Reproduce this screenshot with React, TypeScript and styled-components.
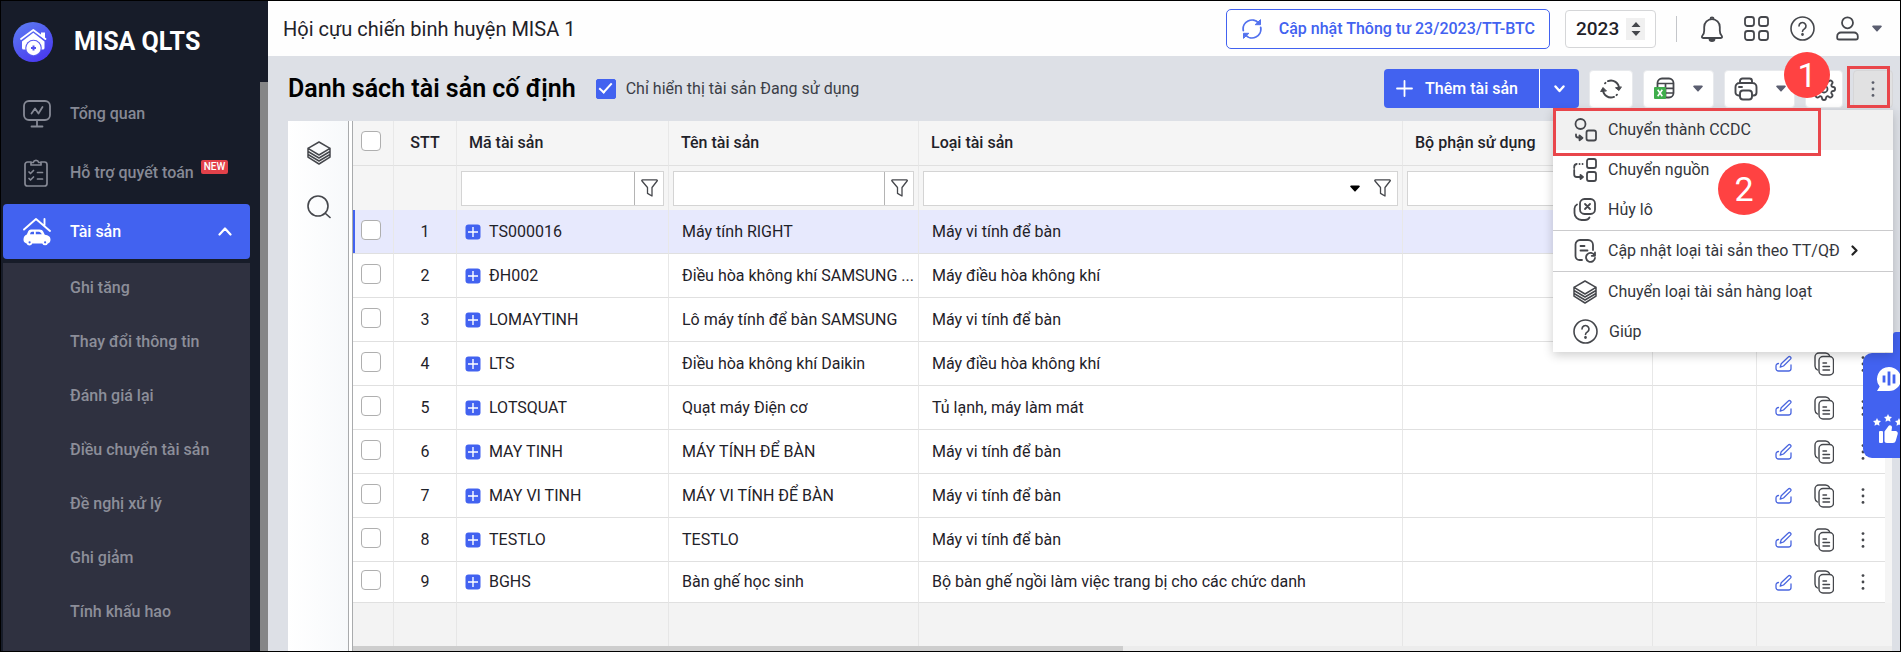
import React from "react";
import styled, { createGlobalStyle, css } from "styled-components";

const BLUE = "#4262f0";
const RED = "#e9464b";
const INK = "#1f2229";
const LINE = "#e0e0e0";

const GlobalStyle = createGlobalStyle`
  *, *::before, *::after { box-sizing: border-box; }
  body {
    margin: 0;
    font-family: Roboto, "Noto Sans", sans-serif;
    font-size: 16px;
    line-height: 20px;
    color: ${INK};
  }
  button, input, select { font: inherit; color: inherit; margin: 0; }
  button { border: 0; padding: 0; background: none; cursor: pointer; }
  a { color: inherit; text-decoration: none; }
  svg { display: block; flex: none; }
`;

/* ---------- shell ---------- */

const Frame = styled.div`
  display: flex;
  height: 100vh;
  min-height: 652px;
  border: 1px solid #000;
  overflow: hidden;
`;

const Sidebar = styled.aside`
  flex: none;
  width: 267px;
  display: flex;
  flex-direction: column;
  background: #171c29;
`;

const Brand = styled.div`
  display: flex;
  align-items: center;
  gap: 21px;
  height: 81px;
  padding-left: 12px;
  color: #fff;
  font-size: 25px;
  line-height: 32px;
  font-weight: 700;
`;

const MenuScroll = styled.div`
  flex: 1;
  min-height: 0;
  display: flex;
`;

const SideNav = styled.nav`
  flex: 1;
  display: flex;
  flex-direction: column;
  gap: 4px;
  padding: 4px 10px 0 2px;
`;

const SideTrack = styled.div`
  width: 8px;
  background: #858687;
`;

const SideItem = styled.a<{ $active?: boolean }>`
  flex: none;
  display: flex;
  align-items: center;
  height: 55px;
  padding: 0 18px 0 20px;
  gap: 19px;
  border-radius: 4px;
  font-weight: 500;
  color: ${(p) => (p.$active ? "#fff" : "#868995")};
  background: ${(p) => (p.$active ? BLUE : "transparent")};
  & > svg:last-child:not(:first-child) { margin-left: auto; }
`;

const ItemLabel = styled.span`
  display: flex;
  gap: 7px;
  white-space: nowrap;
`;

const NewBadge = styled.span`
  align-self: flex-start;
  height: 14px;
  padding: 0 3px;
  margin-top: -3px;
  border-radius: 2px;
  background: #e2414a;
  color: #fff;
  font-size: 10px;
  line-height: 14px;
  font-weight: 500;
`;

const SubMenu = styled.div`
  flex: 1;
  min-height: 0;
  overflow: hidden;
  display: flex;
  flex-direction: column;
  gap: 4px;
  background: #2f3140;
`;

const SubItem = styled.a`
  flex: none;
  height: 50px;
  padding-left: 67px;
  line-height: 50px;
  font-weight: 500;
  color: #8c8e99;
`;

const Main = styled.main`
  flex: 1;
  min-width: 0;
  display: flex;
  flex-direction: column;
  background: #dde0e6;
  position: relative;
`;

/* ---------- top bar ---------- */

const TopBar = styled.header`
  flex: none;
  display: flex;
  align-items: center;
  height: 55px;
  padding: 0 18px 0 15px;
  background: #fefefe;
`;

const OrgName = styled.div`
  flex: 1;
  font-size: 20px;
  line-height: 24px;
`;

const UpdateButton = styled.button`
  display: flex;
  align-items: center;
  gap: 17px;
  height: 40px;
  padding: 0 14px 0 15px;
  border: 1px solid ${BLUE};
  border-radius: 5px;
  background: #fff;
  color: ${BLUE};
  font-weight: 500;
  white-space: nowrap;
`;

const YearBox = styled.label`
  display: flex;
  align-items: center;
  justify-content: space-between;
  width: 91px;
  height: 38px;
  margin-left: 15px;
  padding: 0 10px;
  border: 1px solid #d5d6d8;
  border-radius: 4px;
  background: #fff;
`;

const YearInput = styled.input`
  width: 48px;
  border: 0;
  padding: 0;
  background: none;
  font-size: 19px;
  line-height: 24px;
  font-weight: 500;
`;

const Spinner = styled.span`
  width: 19px;
  height: 22px;
  display: flex;
  align-items: center;
  justify-content: center;
  background: #f0f0f0;
`;

const TopIcons = styled.div`
  display: flex;
  align-items: center;
  gap: 21px;
  margin-left: 20px;
  padding-left: 24px;
  height: 26px;
  border-left: 1px solid #c4c6ca;
`;

const UserButton = styled.button`
  display: flex;
  align-items: center;
  gap: 13px;
`;

/* ---------- tool bar ---------- */

const ToolBar = styled.div`
  flex: none;
  display: flex;
  align-items: center;
  height: 65px;
  padding: 0 7px 0 20px;
  gap: 10px;
`;

const Heading = styled.h1`
  margin: 0 10px 0 0;
  font-size: 25px;
  line-height: 32px;
  font-weight: 600;
  color: #000;
  white-space: nowrap;
`;

const OnlyActive = styled.label`
  flex: 1;
  display: flex;
  align-items: center;
  gap: 10px;
  white-space: nowrap;
  color: #3b3e47;
`;

const CheckBox = styled.input.attrs({ type: "checkbox" })`
  appearance: none;
  flex: none;
  display: block;
  width: 20px;
  height: 20px;
  margin: 0;
  border: 1px solid #afafaf;
  border-radius: 4px;
  background: #fff;
  &:checked {
    border-color: ${BLUE};
    border-radius: 2px;
    background: ${BLUE};
  }
  &:checked::after {
    content: "";
    display: block;
    width: 7px;
    height: 13px;
    margin: 0 auto;
    border: solid #fff;
    border-width: 0 2px 2px 0;
    transform: rotate(42deg);
  }
`;

const SplitButton = styled.div`
  display: flex;
  height: 39px;
  border-radius: 4px;
  overflow: hidden;
  background: ${BLUE};
  color: #fff;
`;

const AddButton = styled.button`
  display: flex;
  align-items: center;
  gap: 12px;
  padding: 0 21px 0 12px;
  font-weight: 500;
  white-space: nowrap;
`;

const SplitArrow = styled.button`
  width: 40px;
  display: flex;
  align-items: center;
  justify-content: center;
  border-left: 1px solid #fff;
`;

const ToolSlot = styled.div`
  position: relative;
`;

const ToolButton = styled.button<{ $width: number; $pressed?: boolean }>`
  display: flex;
  align-items: center;
  justify-content: center;
  gap: 18px;
  width: ${(p) => p.$width}px;
  height: 38px;
  border: 1px solid ${(p) => (p.$pressed ? "#d6d6d8" : "#e8eaed")};
  border-radius: 4px;
  background: ${(p) => (p.$pressed ? "#e1e1e2" : "#fff")};
`;

/* ---------- drop-down menu and callouts ---------- */

const DropMenu = styled.div`
  position: absolute;
  z-index: 5;
  top: 40px;
  right: 0;
  width: 340px;
  background: #fff;
  box-shadow: 0 3px 10px rgba(0, 0, 0, 0.2);
`;

const MenuGroup = styled.div`
  & + & { border-top: 1px solid #cbcbcd; }
`;

const MenuItem = styled.button<{ $hover?: boolean }>`
  display: flex;
  align-items: center;
  gap: 11px;
  width: 100%;
  height: 40px;
  padding-left: 20px;
  background: ${(p) => (p.$hover ? "#f1f1f1" : "transparent")};
  color: #34363c;
  white-space: nowrap;
`;

const Outline = styled.span<{ $kind: "button" | "item" }>`
  position: absolute;
  z-index: 6;
  border: 3px solid ${RED};
  pointer-events: none;
  ${(p) =>
    p.$kind === "button"
      ? css`inset: -4px 3px 0 -6px;`
      : css`top: -2px; left: 0; width: 268px; height: 48px;`}
`;

const Callout = styled.span<{ $size: number; $top: number; $left: number }>`
  position: absolute;
  z-index: 7;
  top: ${(p) => p.$top}px;
  left: ${(p) => p.$left}px;
  width: ${(p) => p.$size}px;
  height: ${(p) => p.$size}px;
  border-radius: 50%;
  background: #ff4242;
  color: #fff;
  font-size: 34px;
  line-height: ${(p) => p.$size}px;
  text-align: center;
`;

/* ---------- grid ---------- */

const Workspace = styled.section`
  flex: 1;
  min-height: 0;
  display: flex;
  padding: 0 8px 0 20px;
`;

const SideTools = styled.div`
  flex: none;
  width: 61px;
  display: flex;
  flex-direction: column;
  align-items: center;
  gap: 30px;
  padding: 20px 0 0 2px;
  background: linear-gradient(90deg, #fff, #f7f9fb);
  border-right: 1px solid #a9abad;
`;

const GridPane = styled.div`
  flex: 1;
  min-width: 0;
  display: flex;
  flex-direction: column;
  margin-left: 3px;
  border-left: 1px solid #a9abad;
  background: #f3f3f3;
  box-shadow: -3px 0 0 #fff;
`;

const Table = styled.table`
  width: 100%;
  table-layout: fixed;
  border-collapse: separate;
  border-spacing: 0;
`;

const Th = styled.th<{ $center?: boolean }>`
  height: 45px;
  padding: 0 0 0 12px;
  text-align: ${(p) => (p.$center ? "center" : "left")};
  font-weight: 500;
  background: #f5f5f5;
  border-right: 1px solid #e8e8e8;
  border-bottom: 1px solid ${LINE};
  white-space: nowrap;
  ${(p) => p.$center && css`padding: 0;`}
  &:last-child, &:nth-last-child(2) { border-right: 0; }
`;

const FilterCell = styled.td`
  height: 44px;
  padding: 0 4px;
  background: #f5f5f5;
  border-right: 1px solid #e8e8e8;
  &:last-child, &:nth-last-child(2) { border-right: 0; }
`;

const FilterBox = styled.div`
  display: flex;
  height: 35px;
  border: 1px solid #d4d4d4;
  background: #fff;
`;

const FilterInput = styled.input`
  flex: 1;
  min-width: 0;
  border: 0;
  padding: 0 8px;
  background: none;
`;

const FilterSelectWrap = styled.div`
  flex: 1;
  display: flex;
  align-items: center;
  padding-right: 8px;
`;

const FilterSelect = styled.select`
  appearance: none;
  flex: 1;
  height: 100%;
  border: 0;
  background: none;
`;

const FilterButton = styled.button<{ $divided?: boolean }>`
  flex: none;
  width: 29px;
  display: flex;
  align-items: center;
  justify-content: center;
  border-left: ${(p) => (p.$divided ? "1px solid #b4b4b4" : "0")};
`;

const Row = styled.tr<{ $selected?: boolean }>`
  & > td { background: ${(p) => (p.$selected ? "#e7e9fd" : "#fff")}; }
  & > td:first-child { box-shadow: ${(p) => (p.$selected ? `inset 2px 0 0 ${BLUE}` : "none")}; }
  & > td:last-child { background: #f5f5f5; border: 0; }
  &:last-child > td { height: 41px; }
`;

const Td = styled.td<{ $center?: boolean }>`
  height: 44px;
  padding: 0 0 0 13px;
  text-align: ${(p) => (p.$center ? "center" : "left")};
  border-right: 1px solid #e8e8e8;
  border-bottom: 1px solid ${LINE};
  white-space: nowrap;
  overflow: hidden;
  text-overflow: ellipsis;
  ${(p) => p.$center && css`padding: 0;`}
  &:nth-last-child(2) { border-right: 0; }
`;

const CodeTd = styled(Td)`
  padding-left: 8px;
`;

const CodeLine = styled.div`
  display: flex;
  align-items: center;
  gap: 8px;
`;

const CheckSlot = styled.div`
  padding: 0 0 4px 8px;
`;

const RowActions = styled.div`
  display: flex;
  align-items: center;
  gap: 22px;
  padding-left: 5px;
`;

const RowMore = styled.button`
  width: 14px;
  display: flex;
  justify-content: center;
`;

const TotalCell = styled.td`
  height: 43px;
  padding: 0;
  background: #f3f3f3;
  border-right: 1px solid #e6e6e6;
  &:last-child, &:nth-last-child(2) { border-right: 0; }
`;

const ScrollTrack = styled.div`
  flex: none;
  height: 6px;
  margin-top: auto;
  background: #ececec;
`;

const ScrollThumb = styled.div`
  width: 50%;
  height: 100%;
  background: #cdcdcd;
`;

/* ---------- support dock ---------- */

const Dock = styled.div`
  position: absolute;
  right: 0;
  top: 331px;
  z-index: 4;
  display: flex;
  flex-direction: column;
  align-items: flex-end;
`;

const DockTab = styled.div`
  width: 7px;
  height: 21px;
  border-radius: 3px 0 0 0;
  background: ${BLUE};
`;

const DockBody = styled.div`
  width: 37px;
  height: 105px;
  overflow: hidden;
  display: flex;
  flex-direction: column;
  gap: 22px;
  padding: 13px 0 0 9px;
  border-radius: 9px 0 0 9px;
  background: ${BLUE};
`;

/* ---------- icons ---------- */

type IconProps = { w: number; h?: number; box?: string; color?: string; sw?: number; children: React.ReactNode };
const Svg = ({ w, h = w, box = "0 0 24 24", color = "#45474c", sw = 1.6, children }: IconProps) => (
  <svg width={w} height={h} viewBox={box} fill="none" stroke={color} strokeWidth={sw} strokeLinecap="round" strokeLinejoin="round" aria-hidden="true">
    {children}
  </svg>
);

const Logo = () => (
  <svg width="40" height="40" viewBox="0 0 40 40" aria-hidden="true">
    <defs>
      <linearGradient id="logo" x1="0" y1="0" x2="0.6" y2="1">
        <stop offset="0" stopColor="#5d80f2" />
        <stop offset="1" stopColor="#4a3cf0" />
      </linearGradient>
    </defs>
    <circle cx="20" cy="20" r="20" fill="url(#logo)" />
    <path d="M9 19.500 20.300 10.800l11.200 8.700v6.500a1.500 1.500 0 0 1-1.500 1.500H10.500A1.500 1.500 0 0 1 9 26Z" fill="#fff" />
    <path d="M28 10.500h4v7l-4-3.500Z" fill="#fff" />
    <path d="m8 17 12.300-9 12.200 9" fill="none" stroke="#fff" strokeWidth="1.800" strokeLinecap="round" strokeLinejoin="round" />
    <circle cx="20.500" cy="26" r="8.300" fill="#5a5cf2" />
    <circle cx="20.500" cy="26" r="7.200" fill="#fff" />
    <path d="M20.500 23.500v5M18 26h5" stroke="#5050f0" strokeWidth="2" />
  </svg>
);

const OverviewIcon = () => (
  <Svg w={28} box="0 0 28 28" color="#868995" sw={1.8}>
    <rect x="1" y="1" width="26" height="19" rx="5" />
    <path d="M8.500 13.500 12 8.500l3.500 5 4-6.500M14 20v6M8.500 26.500h11" />
  </Svg>
);

const ClipboardIcon = () => (
  <Svg w={28} h={30} box="0 0 28 30" color="#868995" sw={1.7}>
    <path d="M8 4H4.500A2.500 2.500 0 0 0 2 6.500v19A2.500 2.500 0 0 0 4.500 28h17a2.500 2.500 0 0 0 2.500-2.500v-19A2.500 2.500 0 0 0 21.500 4H18" />
    <path d="M8 7V4.500h2.300a2.800 2.800 0 0 1 5.400 0H18V7ZM6 14l1.500 1.500 3-3M6 20.500 7.500 22l3-3M14.500 14.500h5M14.500 21h5" />
  </Svg>
);

const AssetIcon = () => (
  <svg width="28" height="28" viewBox="0 0 28 28" aria-hidden="true">
    <path d="m1 11.500 12-10.500 14 12M21.500 7V1" fill="none" stroke="#fff" strokeWidth="1.900" strokeLinecap="round" strokeLinejoin="round" />
    <path d="M8 11.500h8.500c2 0 3 .8 3.800 2.300l1.500 2.900c3.500.6 5.700 1.800 5.700 4.800 0 2.500-1 3.600-2.600 3.900a3 3 0 0 1-5.600.1h-10a3 3 0 0 1-5.700-.1C1.300 24.900.5 23.600.5 21.500c0-2.500 1.300-4.300 3.300-4.900l1-2.400c.7-1.700 1.500-2.700 3.200-2.700Z" fill="#fff" />
    <path d="M7 16.300c.4-1.700 1-2.500 2-2.500h2v2.500ZM12.800 13.800h3c1.400 0 2.200 1 3 2.500h-6Z" fill={BLUE} />
    <circle cx="6.600" cy="24.300" r="1.100" fill={BLUE} />
    <circle cx="22.100" cy="24.300" r="1.100" fill={BLUE} />
  </svg>
);

const ChevronUp = () => (
  <Svg w={14} h={9} box="0 0 14 9" color="#fff" sw={2.2}><path d="m1.500 7.500 5.500-6 5.500 6" /></Svg>
);

const Caret = ({ color = "#5b5e70" }: { color?: string }) => (
  <svg width="10" height="7" viewBox="0 0 10 7" aria-hidden="true">
    <path d="M1 .5h8a.8.8 0 0 1 .7 1.200L5.800 5.900a1 1 0 0 1-1.600 0L.3 1.700A.8.8 0 0 1 1 .5Z" fill={color} />
  </svg>
);

const SyncIcon = () => (
  <Svg w={20} box="0 0 20 20" color="#5271ee" sw={1.8}>
    <path d="M1.300 11.500A8.800 8.800 0 0 1 16.500 4M18.700 8.500A8.800 8.800 0 0 1 3.500 16" />
    <path d="M18.500 1v4.700h-5ZM1.500 19v-4.700h5Z" fill="#5271ee" strokeWidth="1" />
  </Svg>
);

const BellIcon = () => (
  <Svg w={22} h={26} box="0 0 22 26" sw={1.8}>
    <path d="M1.500 19.500c1.300-1.500 1.700-3 1.700-5V11a7.800 7.800 0 0 1 15.600 0v3.500c0 2 .4 3.500 1.700 5 .9 1.300.8 2.500-.8 2.500H2.300c-1.600 0-1.700-1.200-.8-2.500Z" />
    <path d="M9.500 2.800a1.500 1.500 0 0 1 3 0" />
    <path d="M8.500 23h5a2.500 2 0 0 1-5 0Z" fill="#45474c" />
  </Svg>
);

const AppsIcon = () => (
  <Svg w={25} box="0 0 25 25" sw={1.8}>
    <rect x="1" y="1" width="9" height="9" rx="2.500" />
    <rect x="15" y="1" width="9" height="9" rx="2.500" />
    <rect x="1" y="15" width="9" height="9" rx="2.500" />
    <rect x="15" y="15" width="9" height="9" rx="2.500" />
  </Svg>
);

const HelpIcon = () => (
  <Svg w={25} box="0 0 25 25" sw={1.6}>
    <circle cx="12.500" cy="12.500" r="11.500" />
    <path d="M9 10a3.500 3.500 0 1 1 5.500 2.900c-1.200.8-2 1.300-2 2.600" />
    <circle cx="12.500" cy="18.500" r=".6" fill="#45474c" />
  </Svg>
);

const UserIcon = () => (
  <Svg w={23} h={25} box="0 0 23 25" sw={1.8}>
    <circle cx="11.500" cy="6.800" r="5.500" />
    <path d="M5 16.500h13a3.800 3.800 0 0 1 3.800 4v1.200c0 1.100-.8 1.800-1.900 1.800H3.100c-1.100 0-1.900-.7-1.900-1.800v-1.200a3.800 3.800 0 0 1 3.800-4Z" />
  </Svg>
);

const ReloadIcon = () => (
  <Svg w={22} h={20} box="0 0 22 20" sw={1.9}>
    <path d="M3 10.500a8 8 0 0 0 11 7.400M8 2.100a8 8 0 0 1 11 7.400" />
    <path d="M.8 12.200 3 8.500l3.200 3.200ZM21.200 8.200 19 11.500l-3.200-2.500Z" fill="#45474c" strokeWidth="1" />
    <path d="M5.500 3.800 5 4.300M16.500 16.200l.5-.5" />
  </Svg>
);

const ExcelIcon = () => (
  <svg width="21" height="23" viewBox="0 0 21 23" aria-hidden="true">
    <rect x="3.500" y="1.500" width="16" height="19" rx="4.500" fill="none" stroke="#45474c" strokeWidth="1.800" />
    <path d="M3.500 6.500h16M3.500 11.300h16M3.500 16h16M11.500 6.500v14" stroke="#45474c" strokeWidth="1.700" />
    <rect x="0" y="10" width="12" height="12" rx="1" fill="#3fae4c" />
    <path d="m3.700 12.700 4.600 6.600M8.300 12.700l-4.600 6.600" stroke="#fff" strokeWidth="1.600" />
  </svg>
);

const PrintIcon = () => (
  <Svg w={24} h={24} box="0 0 24 24" sw={1.9}>
    <path d="M6 6V4a2.500 2.500 0 0 1 2.500-2.500h7A2.500 2.500 0 0 1 18 4v2M6 18.500H4.500a3 3 0 0 1-3-3V10a4 4 0 0 1 4-4h13a4 4 0 0 1 4 4v5.500a3 3 0 0 1-3 3H18M5 10h3" />
    <rect x="6" y="13.500" width="12" height="9" rx="3" fill="#fff" />
  </Svg>
);

const GearIcon = () => (
  <Svg w={24} box="0 0 24 24" sw={1.8}>
    <circle cx="12" cy="12" r="3.500" />
    <path d="M19.400 15a1.700 1.700 0 0 0 .3 1.800l.1.100a2 2 0 1 1-2.900 2.900l-.1-.1a1.700 1.700 0 0 0-2.800 1.200v.1a2 2 0 0 1-4 0V21a1.700 1.700 0 0 0-2.900-1.200l-.1.100a2 2 0 1 1-2.900-2.900l.1-.1A1.700 1.700 0 0 0 3 14H3a2 2 0 0 1 0-4h.1a1.700 1.700 0 0 0 1.200-2.900L4.200 7a2 2 0 1 1 2.900-2.900l.1.100A1.700 1.700 0 0 0 10 3V3a2 2 0 0 1 4 0v.1a1.700 1.700 0 0 0 2.900 1.200l.1-.1A2 2 0 1 1 19.900 7l-.1.100A1.700 1.700 0 0 0 21 10h.1a2 2 0 0 1 0 4H21a1.700 1.700 0 0 0-1.600 1Z" />
  </Svg>
);

const DotsIcon = ({ color = "#45474c" }: { color?: string }) => (
  <svg width="4" height="16" viewBox="0 0 4 16" fill={color} aria-hidden="true">
    <circle cx="2" cy="1.600" r="1.400" /><circle cx="2" cy="8" r="1.400" /><circle cx="2" cy="14.400" r="1.400" />
  </svg>
);

const LayersIcon = () => (
  <Svg w={24} box="0 0 24 24" sw={1.5}>
    <path d="M12 1 23 7.300 12 14 1 7.300ZM1 7.300v3.200L12 17l11-6.500V7.300M1 10.500v3L12 20l11-6.500v-3M1 13.500v2.700L12 23l11-6.800v-2.700" />
  </Svg>
);

const SearchIcon = () => (
  <Svg w={24} box="0 0 24 24" sw={1.6}>
    <circle cx="11" cy="11" r="10" /><path d="m18.500 18.500 4.500 4" />
  </Svg>
);

const FunnelIcon = () => (
  <Svg w={17} h={18} box="0 0 17 18" sw={1.3}>
    <path d="M1.500.8h14a.7.7 0 0 1 .6 1.200L11 8.500V17l-4.500-2.600V8.500L1 2A.7.7 0 0 1 1.500.8Z" />
  </Svg>
);

const ExpandIcon = () => (
  <svg width="16" height="16" viewBox="0 0 16 16" aria-hidden="true">
    <rect x=".5" y=".5" width="15" height="15" rx="3" fill={BLUE} />
    <path d="M8 3v10M3 8h10" stroke="#fff" strokeWidth="1.400" />
  </svg>
);

const ToToolIcon = () => (
  <Svg w={24} box="0 0 24 24" sw={1.8}>
    <circle cx="7.500" cy="6" r="5" /><rect x="13.500" y="12.500" width="9.500" height="10" rx="2" />
    <path d="M3 16.500v1c0 1.300.7 2 2 2h2" sw-role="arm" />
    <path d="M6.500 17.300 9.500 20l-3 2.300Z" fill="#45474c" />
  </Svg>
);

const ToSourceIcon = () => (
  <Svg w={24} box="0 0 24 24" sw={1.8}>
    <rect x="14" y="1" width="9" height="9" rx="2" /><rect x="14" y="14" width="9" height="9" rx="2" />
    <path d="M9.500 6h.1M6.500 6h.1M1.200 10V9a3 3 0 0 1 2.500-3M1.200 12v4.500a2.500 2.500 0 0 0 2.500 2.500H9" />
    <path d="M7.500 17 10 19l-2.500 2Z" fill="#45474c" />
  </Svg>
);

const CancelLotIcon = () => (
  <Svg w={24} box="0 0 24 24" sw={1.8}>
    <rect x="7" y="1" width="15" height="15" rx="4.500" />
    <path d="M4 6.500a5 5 0 0 0-2.500 4V15a7 7 0 0 0 7 7h3.500c2 0 3.500-.7 4.500-2.500M12 6l5 5M17 6l-5 5" />
  </Svg>
);

const UpdateDocIcon = () => (
  <Svg w={24} box="0 0 24 24" sw={1.8}>
    <path d="M20 11V6a5 5 0 0 0-5-5H7a4.500 4.500 0 0 0-4.500 4.500V17a4 4 0 0 0 4 4H9M7.500 7h4M7.500 11.500h7" />
    <path d="M21.500 16.300a4.500 4.500 0 1 0 .5 2.700M22 13.500v3.300h-3.300" />
  </Svg>
);

const EditIcon = () => (
  <Svg w={17} box="0 0 17 17" color="#4a66e0" sw={1.3}>
    <path d="M3.500 8.500A2.500 2.500 0 0 0 1 11v2.500A2.500 2.500 0 0 0 3.500 16h10a2.500 2.500 0 0 0 2.500-2.500V10" />
    <path d="M13.300 2a1.500 1.500 0 0 1 2.200 2.100L8.500 11l-3.300 1.200 1-3.400Z" />
  </Svg>
);

const CopyIcon = () => (
  <Svg w={20} h={24} box="0 0 20 24" sw={1.4}>
    <path d="M3.500 18C1.700 17 1 16 1 14V5a4 4 0 0 1 4-4h6.500c2 0 3 .7 4 2.300" />
    <rect x="5" y="4.500" width="14.500" height="18.500" rx="4" />
    <path d="M9 11h3.500M9 14.500h6.500M9 18h6.500" />
  </Svg>
);

const ChatIcon = () => (
  <svg width="30" height="26" viewBox="-4 0 30 26" aria-hidden="true">
    <path d="M13 1a12 12 0 1 1 0 24H1l2.700-4.500A12 12 0 0 1 13 1Z" fill="#fff" />
    <path d="M8 9.500v7M13 5.500v14M18 8.500v9" stroke={BLUE} strokeWidth="2.800" />
  </svg>
);

const RateIcon = () => (
  <svg width="30" height="30" viewBox="0 0 30 30" fill="#fff" aria-hidden="true">
    <path d="m5 4 1.200 2.600 2.800.4-2 2 .5 2.800L5 10.400l-2.500 1.400L3 9 1 7l2.800-.4Z" />
    <path d="m16 0 1.200 2.600 2.800.4-2 2 .5 2.800L16 6.400l-2.500 1.400L14 5l-2-2 2.800-.4ZM27 4l1.200 2.600 2.800.4-2 2 .5 2.800-2.500-1.400-2.500 1.400L25 9l-2-2 2.800-.4Z" />
    <rect x="7" y="17" width="4" height="12" rx="1" />
    <path d="M12.500 17.500 16.500 12c.8-1.500 3.500-.8 3.500 1.200L19.500 17h4a2.300 2.300 0 0 1 2.200 3l-2 7a3 3 0 0 1-2.700 2h-6c-1.500 0-2.500-.7-2.500-2Z" />
  </svg>
);

/* ---------- data ---------- */

const subItems = ["Ghi tăng", "Thay đổi thông tin", "Đánh giá lại", "Điều chuyển tài sản", "Đề nghị xử lý", "Ghi giảm", "Tính khấu hao"];

const assets = [
  ["TS000016", "Máy tính RIGHT", "Máy vi tính để bàn"],
  ["ĐH002", "Điều hòa không khí SAMSUNG ...", "Máy điều hòa không khí"],
  ["LOMAYTINH", "Lô máy tính để bàn SAMSUNG", "Máy vi tính để bàn"],
  ["LTS", "Điều hòa không khí Daikin", "Máy điều hòa không khí"],
  ["LOTSQUAT", "Quạt máy Điện cơ", "Tủ lạnh, máy làm mát"],
  ["MAY TINH", "MÁY TÍNH ĐỂ BÀN", "Máy vi tính để bàn"],
  ["MAY VI TINH", "MÁY VI TÍNH ĐỂ BÀN", "Máy vi tính để bàn"],
  ["TESTLO", "TESTLO", "Máy vi tính để bàn"],
  ["BGHS", "Bàn ghế học sinh", "Bộ bàn ghế ngồi làm việc trang bị cho các chức danh"],
];

const columnWidths = [41, 63, 212, 250, undefined, 250, 104, 128, 7];

const TextFilter = ({ label }: { label: string }) => (
  <FilterBox>
    <FilterInput aria-label={label} />
    <FilterButton $divided aria-label={`Điều kiện ${label}`}><FunnelIcon /></FilterButton>
  </FilterBox>
);

const MoreMenu = () => (
  <DropMenu role="menu">
    <Outline $kind="item" />
    <Callout $size={52} $top={53} $left={165}>2</Callout>
    <MenuGroup>
      <MenuItem $hover role="menuitem"><ToToolIcon />Chuyển thành CCDC</MenuItem>
      <MenuItem role="menuitem"><ToSourceIcon />Chuyển nguồn</MenuItem>
      <MenuItem role="menuitem"><CancelLotIcon />Hủy lô</MenuItem>
    </MenuGroup>
    <MenuGroup>
      <MenuItem role="menuitem">
        <UpdateDocIcon />Cập nhật loại tài sản theo TT/QĐ
        <Svg w={7} h={11} box="0 0 7 11" color="#222" sw={2.2}><path d="m1.500 1.500 4 4-4 4" /></Svg>
      </MenuItem>
    </MenuGroup>
    <MenuGroup>
      <MenuItem role="menuitem"><LayersIcon />Chuyển loại tài sản hàng loạt</MenuItem>
      <MenuItem role="menuitem"><HelpIcon />Giúp</MenuItem>
    </MenuGroup>
  </DropMenu>
);

const AssetTable = () => (
  <Table>
    <colgroup>
      {columnWidths.map((width, i) => <col key={i} width={width} />)}
    </colgroup>
    <thead>
      <tr>
        <Th $center><CheckSlot><CheckBox aria-label="Chọn tất cả" /></CheckSlot></Th>
        <Th $center>STT</Th>
        <Th>Mã tài sản</Th>
        <Th>Tên tài sản</Th>
        <Th>Loại tài sản</Th>
        <Th>Bộ phận sử dụng</Th>
        <Th />
        <Th />
        <Th />
      </tr>
    </thead>
    <tbody>
      <tr>
        <FilterCell />
        <FilterCell />
        <FilterCell><TextFilter label="Mã tài sản" /></FilterCell>
        <FilterCell><TextFilter label="Tên tài sản" /></FilterCell>
        <FilterCell>
          <FilterBox>
            <FilterSelectWrap>
              <FilterSelect aria-label="Loại tài sản"><option /></FilterSelect>
              <Caret color="#000" />
            </FilterSelectWrap>
            <FilterButton aria-label="Điều kiện Loại tài sản"><FunnelIcon /></FilterButton>
          </FilterBox>
        </FilterCell>
        <FilterCell><TextFilter label="Bộ phận sử dụng" /></FilterCell>
        <FilterCell />
        <FilterCell />
        <FilterCell />
      </tr>
      {assets.map(([code, name, kind], i) => (
        <Row key={code} $selected={i === 0}>
          <Td $center><CheckSlot><CheckBox aria-label={`Chọn ${code}`} /></CheckSlot></Td>
          <Td $center>{i + 1}</Td>
          <CodeTd><CodeLine><ExpandIcon />{code}</CodeLine></CodeTd>
          <Td>{name}</Td>
          <Td>{kind}</Td>
          <Td />
          <Td />
          <Td>
            <RowActions>
              <button aria-label="Sửa"><EditIcon /></button>
              <button aria-label="Nhân bản"><CopyIcon /></button>
              <RowMore aria-label="Thêm"><DotsIcon /></RowMore>
            </RowActions>
          </Td>
          <Td />
        </Row>
      ))}
    </tbody>
    <tfoot>
      <tr>{columnWidths.map((_, i) => <TotalCell key={i} />)}</tr>
    </tfoot>
  </Table>
);

export default function App() {
  return (
    <>
      <GlobalStyle />
      <Frame>
        <Sidebar>
          <Brand><Logo />MISA QLTS</Brand>
          <MenuScroll>
            <SideNav>
              <SideItem href="#"><OverviewIcon />Tổng quan</SideItem>
              <SideItem href="#">
                <ClipboardIcon />
                <ItemLabel>Hỗ trợ quyết toán<NewBadge>NEW</NewBadge></ItemLabel>
              </SideItem>
              <SideItem href="#" $active><AssetIcon />Tài sản<ChevronUp /></SideItem>
              <SubMenu>
                {subItems.map((label) => <SubItem href="#" key={label}>{label}</SubItem>)}
              </SubMenu>
            </SideNav>
            <SideTrack />
          </MenuScroll>
        </Sidebar>
        <Main>
          <TopBar>
            <OrgName>Hội cựu chiến binh huyện MISA 1</OrgName>
            <UpdateButton><SyncIcon />Cập nhật Thông tư 23/2023/TT-BTC</UpdateButton>
            <YearBox>
              <YearInput aria-label="Năm" defaultValue="2023" />
              <Spinner>
                <svg width="10" height="14" viewBox="0 0 10 14" fill="#45474c" aria-hidden="true">
                  <path d="M5 0 9.500 5H.5ZM5 14 .5 9h9Z" />
                </svg>
              </Spinner>
            </YearBox>
            <TopIcons>
              <button aria-label="Thông báo"><BellIcon /></button>
              <button aria-label="Ứng dụng"><AppsIcon /></button>
              <button aria-label="Trợ giúp"><HelpIcon /></button>
              <UserButton aria-label="Tài khoản"><UserIcon /><Caret /></UserButton>
            </TopIcons>
          </TopBar>
          <ToolBar>
            <Heading>Danh sách tài sản cố định</Heading>
            <OnlyActive><CheckBox defaultChecked />Chỉ hiển thị tài sản Đang sử dụng</OnlyActive>
            <SplitButton>
              <AddButton>
                <Svg w={17} box="0 0 17 17" color="#fff" sw={1.8}><path d="M8.500 1v15M1 8.500h15" /></Svg>
                Thêm tài sản
              </AddButton>
              <SplitArrow aria-label="Tùy chọn thêm">
                <Svg w={11} h={8} box="0 0 11 8" color="#fff" sw={2.4}><path d="m1.500 1.500 4 4.500 4-4.500" /></Svg>
              </SplitArrow>
            </SplitButton>
            <ToolButton $width={44} aria-label="Tải lại"><ReloadIcon /></ToolButton>
            <ToolButton $width={71} aria-label="Xuất Excel"><ExcelIcon /><Caret /></ToolButton>
            <ToolButton $width={71} aria-label="In"><PrintIcon /><Caret /></ToolButton>
            <ToolSlot>
              <ToolButton $width={38} aria-label="Thiết lập"><GearIcon /></ToolButton>
              <Callout $size={46} $top={-18} $left={-21}>1</Callout>
            </ToolSlot>
            <ToolSlot>
              <ToolButton $width={40} $pressed aria-label="Khác"><DotsIcon color="#5b5e6a" /></ToolButton>
              <Outline $kind="button" />
              <MoreMenu />
            </ToolSlot>
          </ToolBar>
          <Workspace>
            <SideTools>
              <button aria-label="Phân nhóm"><LayersIcon /></button>
              <button aria-label="Tìm kiếm"><SearchIcon /></button>
            </SideTools>
            <GridPane>
              <AssetTable />
              <ScrollTrack><ScrollThumb /></ScrollTrack>
            </GridPane>
          </Workspace>
          <Dock>
            <DockTab />
            <DockBody>
              <ChatIcon />
              <RateIcon />
            </DockBody>
          </Dock>
        </Main>
      </Frame>
    </>
  );
}
